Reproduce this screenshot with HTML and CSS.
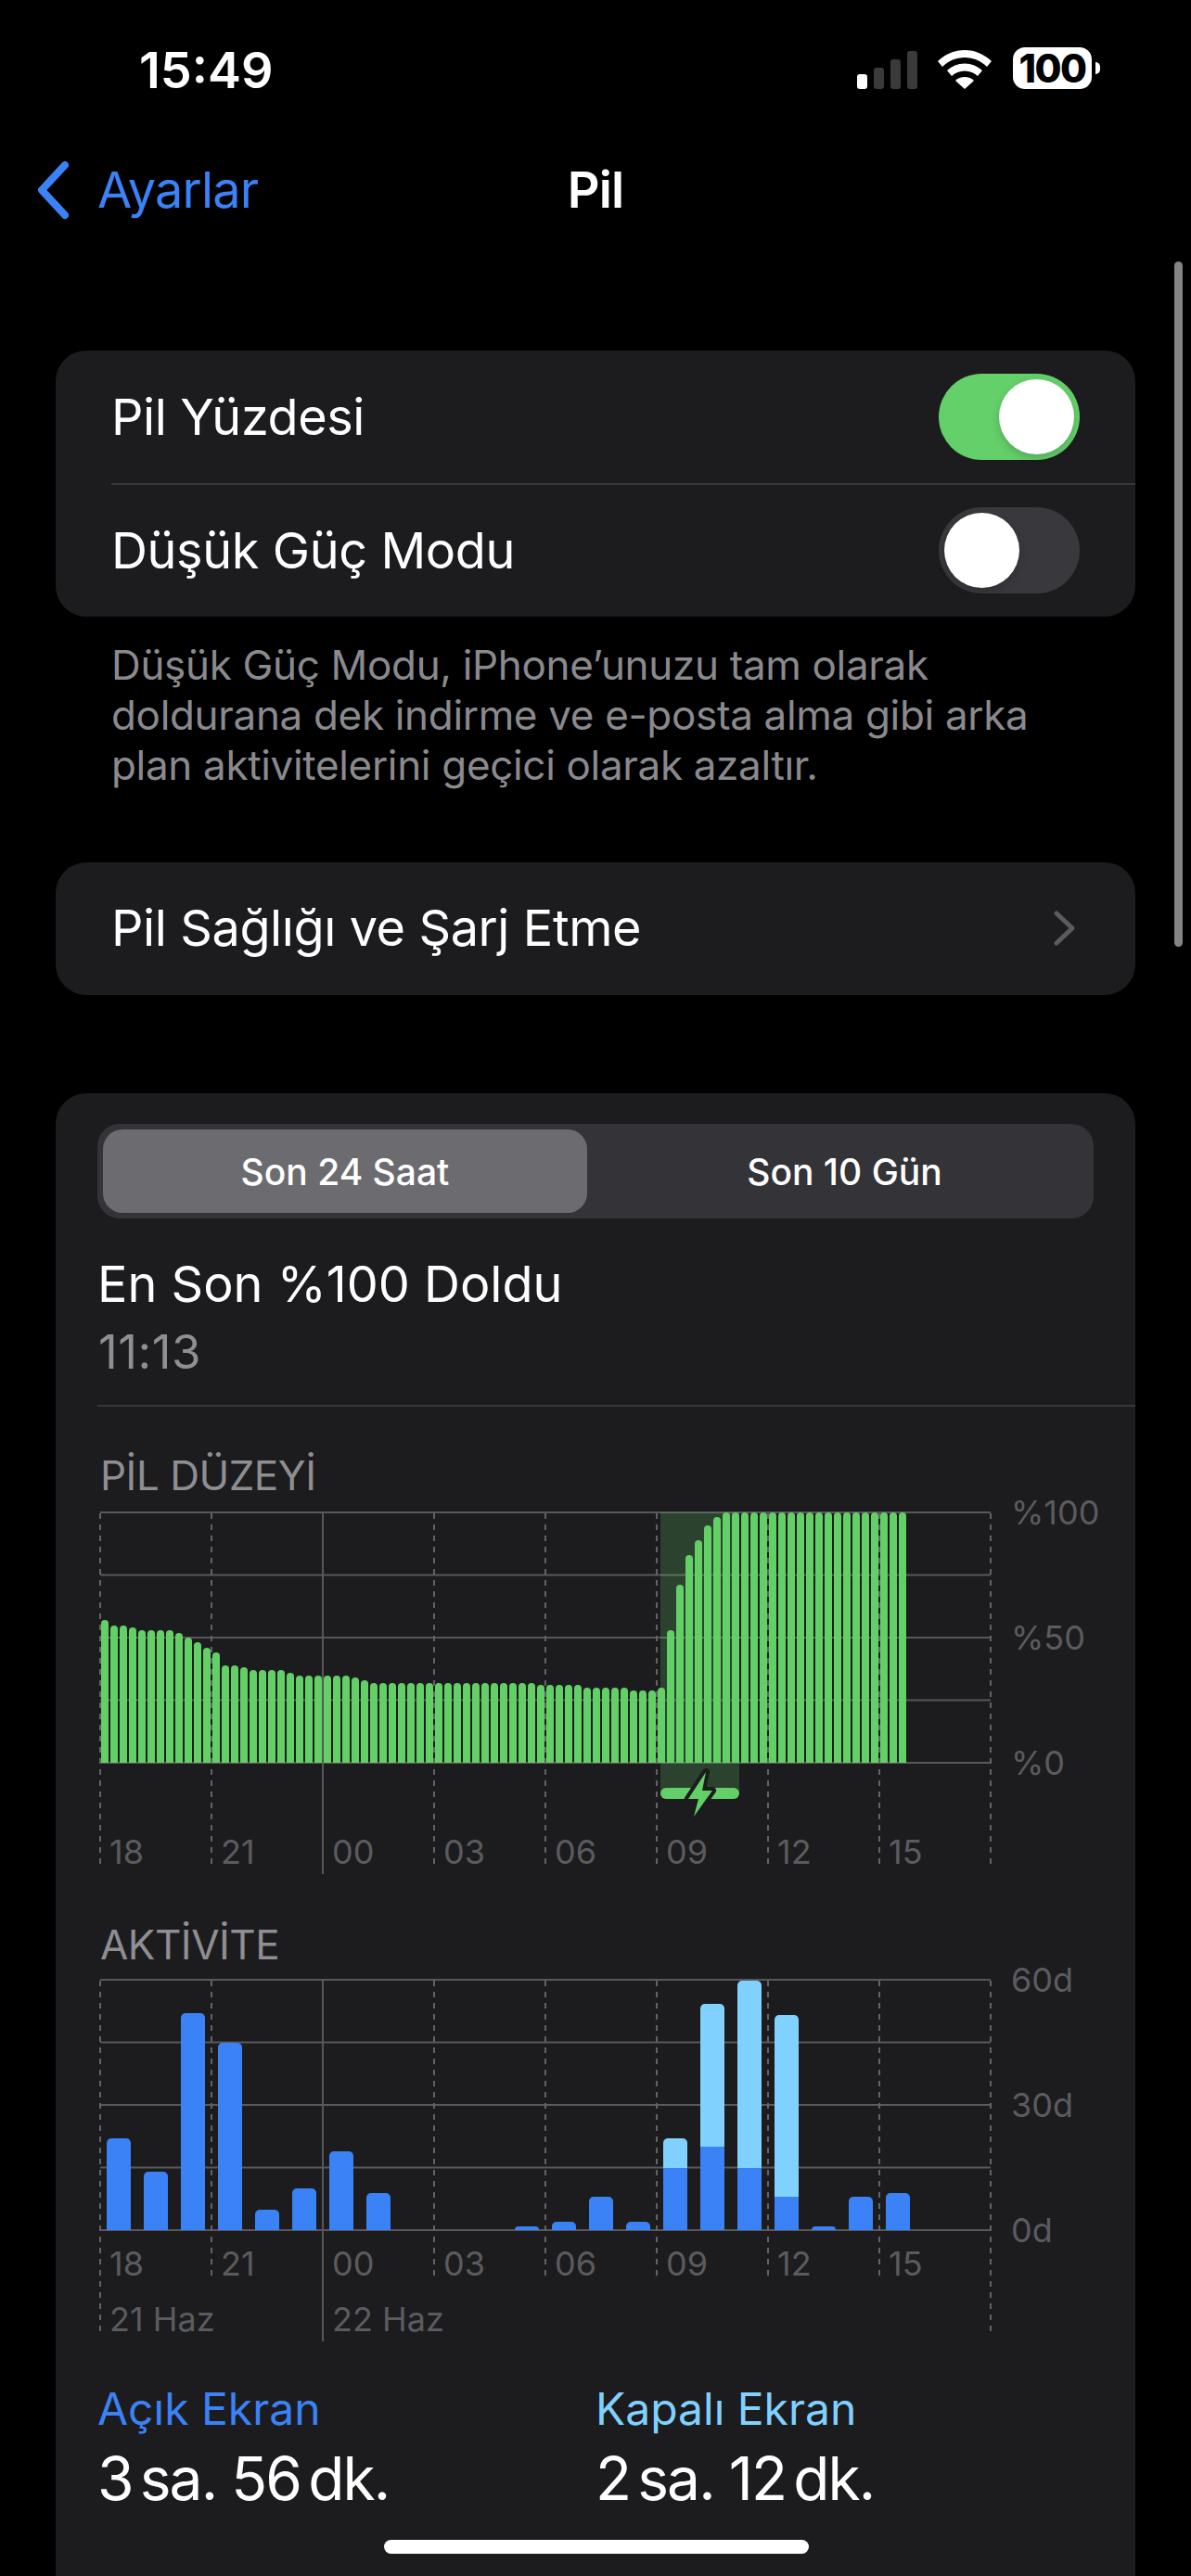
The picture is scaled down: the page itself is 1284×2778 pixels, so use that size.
FILE: index.html
```html
<!DOCTYPE html>
<html lang="tr">
<head>
<meta charset="utf-8">
<title>Pil</title>
<link rel="stylesheet" href="styles.css">
</head>
<body>
<div class="screen">
  <header class="status">
    <span class="clock">15:49</span>
    <div class="status-icons">
      <div class="signal"><i class="on s1"></i><i class="s2"></i><i class="s3"></i><i class="s4"></i></div>
      <svg class="wifi" viewBox="0 0 58 42"><path fill="#fff" d="M29 0C18 0 8 4.500 0 12l5 6C11.500 11.500 20 8 29 8s17.500 3.500 24 10l5-6C50 4.500 40 0 29 0z"/><path fill="#fff" d="M29 14.500c-7.500 0-14 3-19 7.500l5 6c3.500-3.300 8.500-5.500 14-5.500s10.500 2.200 14 5.500l5-6c-5-4.500-11.500-7.500-19-7.500z"/><path fill="#fff" d="M29 29c-4 0-7.500 1.500-10 4l10 9 10-9c-2.500-2.500-6-4-10-4z"/></svg>
      <div class="battery"><span class="battery-body">100</span><i class="battery-nub"></i></div>
    </div>
  </header>

  <nav class="nav">
    <a class="back">
      <svg class="back-icon" viewBox="0 0 36 64"><path d="M31 5 6 32l25 27" fill="none" stroke="#3b82f7" stroke-width="8" stroke-linecap="round" stroke-linejoin="round"/></svg>
      <span>Ayarlar</span>
    </a>
    <h1 class="nav-title">Pil</h1>
    <span></span>
  </nav>

  <main class="content">
    <section class="card rows">
      <div class="row">
        <span class="row-label">Pil Yüzdesi</span>
        <span class="toggle toggle-on"><i class="knob"></i></span>
      </div>
      <div class="row">
        <span class="row-label">Düşük Güç Modu</span>
        <span class="toggle"><i class="knob"></i></span>
      </div>
    </section>
    <p class="note">Düşük Güç Modu, iPhone’unuzu tam olarak<br>doldurana dek indirme ve e-posta alma gibi arka<br>plan aktivitelerini geçici olarak azaltır.</p>

    <section class="card single">
      <div class="row">
        <span class="row-label">Pil Sağlığı ve Şarj Etme</span>
        <svg class="chevron" viewBox="0 0 26 40"><path d="M4 4l17 16L4 36" fill="none" stroke="#5b5b5f" stroke-width="5" stroke-linecap="round" stroke-linejoin="round"/></svg>
      </div>
    </section>

    <section class="card usage">
      <div class="segmented">
        <span class="segment segment-active">Son 24 Saat</span>
        <span class="segment">Son 10 Gün</span>
      </div>
      <h2 class="full-title">En Son %100 Doldu</h2>
      <p class="full-time">11:13</p>
      <hr class="usage-rule">

      <div class="chart chart-level">
        <h3 class="chart-title">PİL DÜZEYİ</h3>
        <div class="plot">
          <svg class="grid grid-level" viewBox="0 0 962 392">
            <g class="hline">
              <line x1="1" y1="1" x2="961" y2="1"/><line x1="1" y1="68.500" x2="961" y2="68.500"/><line x1="1" y1="136" x2="961" y2="136"/><line x1="1" y1="203.500" x2="961" y2="203.500"/><line x1="1" y1="271" x2="961" y2="271"/>
            </g>
            <g class="vdash">
              <line x1="1" y1="2" x2="1" y2="386"/><line x1="121" y1="2" x2="121" y2="386"/><line x1="361" y1="2" x2="361" y2="386"/><line x1="481" y1="2" x2="481" y2="386"/><line x1="601" y1="2" x2="601" y2="386"/><line x1="721" y1="2" x2="721" y2="386"/><line x1="841" y1="2" x2="841" y2="386"/><line x1="961" y1="2" x2="961" y2="386"/>
            </g>
            <line class="vsolid" x1="241" y1="1" x2="241" y2="391"/>
          </svg>
          <div class="charging"></div>
          <div class="level-bars">
            <i style="height:57%"></i><i style="height:55%"></i><i style="height:55%"></i><i style="height:54%"></i><i style="height:53%"></i><i style="height:53%"></i><i style="height:53%"></i><i style="height:53%"></i><i style="height:52%"></i><i style="height:50%"></i><i style="height:48%"></i><i style="height:46%"></i><i style="height:44%"></i><i style="height:39%"></i><i style="height:39%"></i><i style="height:38%"></i><i style="height:37%"></i><i style="height:37%"></i><i style="height:37%"></i><i style="height:37%"></i><i style="height:36%"></i><i style="height:35%"></i><i style="height:35%"></i><i style="height:35%"></i><i style="height:35%"></i><i style="height:35%"></i><i style="height:35%"></i><i style="height:34%"></i><i style="height:33%"></i><i style="height:32%"></i><i style="height:32%"></i><i style="height:32%"></i><i style="height:32%"></i><i style="height:32%"></i><i style="height:32%"></i><i style="height:32%"></i><i style="height:32%"></i><i style="height:32%"></i><i style="height:32%"></i><i style="height:32%"></i><i style="height:32%"></i><i style="height:32%"></i><i style="height:32%"></i><i style="height:32%"></i><i style="height:32%"></i><i style="height:32%"></i><i style="height:32%"></i><i style="height:31%"></i><i style="height:31%"></i><i style="height:31%"></i><i style="height:31%"></i><i style="height:31%"></i><i style="height:30%"></i><i style="height:30%"></i><i style="height:30%"></i><i style="height:30%"></i><i style="height:30%"></i><i style="height:29%"></i><i style="height:29%"></i><i style="height:29%"></i><i style="height:30%"></i><i style="height:53%"></i><i style="height:71%"></i><i style="height:83%"></i><i style="height:89%"></i><i style="height:95%"></i><i style="height:98%"></i><i style="height:100%"></i><i style="height:100%"></i><i style="height:100%"></i><i style="height:100%"></i><i style="height:100%"></i><i style="height:100%"></i><i style="height:100%"></i><i style="height:100%"></i><i style="height:100%"></i><i style="height:100%"></i><i style="height:100%"></i><i style="height:100%"></i><i style="height:100%"></i><i style="height:100%"></i><i style="height:100%"></i><i style="height:100%"></i><i style="height:100%"></i><i style="height:100%"></i><i style="height:100%"></i><i style="height:100%"></i>
          </div>
          <div class="charge-pill"></div>
          <svg class="bolt" viewBox="0 0 48 58"><path d="M30 5 11 34h11l-5 19 20-28H26z" fill="#63cf67" stroke="#1c1c1e" stroke-width="8" stroke-linejoin="round" paint-order="stroke"/></svg>
          <div class="y-axis"><span>%100</span><span>%50</span><span>%0</span></div>
        </div>
        <div class="hours"><span>18</span><span>21</span><span>00</span><span>03</span><span>06</span><span>09</span><span>12</span><span>15</span></div>
      </div>

      <div class="chart chart-activity">
        <h3 class="chart-title">AKTİVİTE</h3>
        <div class="plot">
          <svg class="grid grid-activity" viewBox="0 0 962 392">
            <g class="hline">
              <line x1="1" y1="1" x2="961" y2="1"/><line x1="1" y1="68.500" x2="961" y2="68.500"/><line x1="1" y1="136" x2="961" y2="136"/><line x1="1" y1="203.500" x2="961" y2="203.500"/><line x1="1" y1="271" x2="961" y2="271"/>
            </g>
            <g class="vdash">
              <line x1="1" y1="2" x2="1" y2="384"/><line x1="121" y1="2" x2="121" y2="324"/><line x1="361" y1="2" x2="361" y2="324"/><line x1="481" y1="2" x2="481" y2="324"/><line x1="601" y1="2" x2="601" y2="324"/><line x1="721" y1="2" x2="721" y2="324"/><line x1="841" y1="2" x2="841" y2="324"/><line x1="961" y1="2" x2="961" y2="384"/>
            </g>
            <line class="vsolid" x1="241" y1="1" x2="241" y2="391"/>
          </svg>
          <div class="activity-bars">
            <i class="stack" style="height:99px"><b class="on-screen" style="height:99px"></b></i>
            <i class="stack" style="height:63px"><b class="on-screen" style="height:63px"></b></i>
            <i class="stack" style="height:234px"><b class="on-screen" style="height:234px"></b></i>
            <i class="stack" style="height:202px"><b class="on-screen" style="height:202px"></b></i>
            <i class="stack" style="height:22px"><b class="on-screen" style="height:22px"></b></i>
            <i class="stack" style="height:45px"><b class="on-screen" style="height:45px"></b></i>
            <i class="stack" style="height:85px"><b class="on-screen" style="height:85px"></b></i>
            <i class="stack" style="height:40px"><b class="on-screen" style="height:40px"></b></i>
            <i class="stack"></i>
            <i class="stack"></i>
            <i class="stack"></i>
            <i class="stack" style="height:4px"><b class="on-screen" style="height:4px"></b></i>
            <i class="stack" style="height:9px"><b class="on-screen" style="height:9px"></b></i>
            <i class="stack" style="height:36px"><b class="on-screen" style="height:36px"></b></i>
            <i class="stack" style="height:9px"><b class="on-screen" style="height:9px"></b></i>
            <i class="stack" style="height:99px"><b class="on-screen" style="height:67px"></b></i>
            <i class="stack" style="height:244px"><b class="on-screen" style="height:90px"></b></i>
            <i class="stack" style="height:269px"><b class="on-screen" style="height:67px"></b></i>
            <i class="stack" style="height:232px"><b class="on-screen" style="height:36px"></b></i>
            <i class="stack" style="height:4px"><b class="on-screen" style="height:4px"></b></i>
            <i class="stack" style="height:36px"><b class="on-screen" style="height:36px"></b></i>
            <i class="stack" style="height:40px"><b class="on-screen" style="height:40px"></b></i>
          </div>
          <div class="y-axis"><span>60d</span><span>30d</span><span>0d</span></div>
        </div>
        <div class="hours"><span>18</span><span>21</span><span>00</span><span>03</span><span>06</span><span>09</span><span>12</span><span>15</span></div>
        <div class="dates"><span>21 Haz</span><span>22 Haz</span></div>
      </div>

      <div class="totals">
        <div class="total">
          <div class="total-label total-on">Açık Ekran</div>
          <div class="total-value"><span>3 sa.</span> <span>56 dk.</span></div>
        </div>
        <div class="total">
          <div class="total-label total-off">Kapalı Ekran</div>
          <div class="total-value"><span>2 sa.</span> <span>12 dk.</span></div>
        </div>
      </div>
    </section>
  </main>

  <div class="scrollbar"></div>
  <div class="home-indicator"></div>
</div>
</body>
</html>
```
FILE: styles.css
```css
* { box-sizing: border-box; }
html, body { margin: 0; padding: 0; background: #000; }
body { font-family: Inter, "Noto Sans", "Liberation Sans", sans-serif; color: #fff; }
h1, h2, h3, p, hr { margin: 0; padding: 0; font: inherit; }
i, b { display: block; font-style: normal; }

.screen { position: relative; width: 1284px; height: 2778px; overflow: hidden; background: #000; }

/* status bar */
.status { display: flex; justify-content: space-between; height: 150px; padding: 48px 98px 0 150px; }
.clock { font-size: 54px; line-height: 56px; font-weight: 600; }
.status-icons { display: flex; align-items: flex-start; padding-top: 5px; }
.signal { display: flex; align-items: flex-end; gap: 7px; height: 41px; margin-top: 2px; }
.signal i { width: 11px; border-radius: 3px; background: #3a3a3a; }
.signal .on { background: #fff; }
.s1 { height: 16px; } .s2 { height: 23px; } .s3 { height: 32px; } .s4 { height: 41px; }
.wifi { width: 58px; height: 42px; margin: 1px 0 0 22px; }
.battery { display: flex; align-items: center; margin: -2px 0 0 23px; }
.battery-body { width: 85px; height: 45px; border-radius: 13px; background: #fff; color: #000; font-size: 42px; line-height: 45px; font-weight: 800; text-align: center; letter-spacing: -1.500px; }
.battery-nub { width: 5px; height: 13px; margin-left: 4px; background: #fff; border-radius: 0 6px 6px 0; }

/* nav */
.nav { display: grid; grid-template-columns: 1fr auto 1fr; align-items: center; height: 110px; padding: 0 39px; }
.back { display: flex; align-items: center; gap: 30px; color: #3b82f7; font-size: 54px; line-height: 64px; letter-spacing: -.8px; }
.back-icon { width: 36px; height: 64px; }
.nav-title { font-size: 54px; line-height: 64px; font-weight: 600; letter-spacing: -.8px; }

/* content */
.content { padding: 118px 60px 0; }
.card { background: #1c1c1e; border-radius: 33px; }
.row { display: flex; align-items: center; justify-content: space-between; height: 143.500px; padding: 0 60px; font-size: 54px; letter-spacing: -.4px; }
.rows .row + .row { position: relative; }
.rows .row + .row::before { content: ""; position: absolute; top: -1px; left: 60px; right: 0; height: 2px; background: #38383a; }
.toggle { display: flex; align-items: center; width: 152px; height: 93px; padding: 0 6px; border-radius: 47px; background: #39393d; }
.toggle-on { background: #64d06a; justify-content: flex-end; }
.knob { width: 81px; height: 81px; border-radius: 50%; background: #fff; box-shadow: 0 4px 10px rgba(0,0,0,.18); }
.note { padding: 25px 60px 0; height: 265px; font-size: 44px; line-height: 54px; color: #8a8a8e; letter-spacing: -.33px; }
.single .row { height: 143px; padding-right: 63px; padding-bottom: 2px; }
.chevron { width: 26px; height: 40px; }

.usage { margin-top: 106px; height: 1700px; padding: 33px 45px 0; overflow: hidden; }
.segmented { display: grid; grid-template-columns: 522px 1fr; column-gap: 9px; align-items: center; height: 102px; padding: 6px 0 6px 6px; border-radius: 24px; background: #333338; font-size: 39px; font-weight: 500; }
.segment { display: flex; align-items: center; justify-content: center; height: 90px; border-radius: 21px; }
.segment-active { background: #6c6c70; }
.full-title { margin: 39px 0 0 0; font-size: 54px; line-height: 64px; }
.full-time { margin: 9px 0 0 1px; font-size: 51px; line-height: 64px; color: #8e8e93; letter-spacing: .5px; }
.usage-rule { height: 2px; margin: 25px -45px 0 0; border: 0; background: #38383a; }

/* charts */
.chart { margin-left: 2px; }
.chart-title { font-size: 44px; line-height: 48px; color: #8e8e93; letter-spacing: -.5px; padding-left: 1px; }
.chart-level { padding-top: 50px; }
.chart-activity { margin-top: 54px; }
.plot { position: relative; display: grid; grid-template-columns: 961px auto; height: 272px; }
.chart-level .plot { margin-top: 15px; }
.chart-activity .plot { margin-top: 13px; }
.grid { position: absolute; top: 0; left: 0; width: 962px; height: 392px; }
.hline line { stroke: #58585a; stroke-width: 2; }
.vdash line { stroke: #636365; stroke-width: 2; stroke-dasharray: 6 6; }
.vsolid { stroke: #58585a; stroke-width: 2; }
.charging { position: absolute; top: 1px; left: 605px; width: 85px; height: 303px; background: rgba(99,207,103,.22); }
.level-bars { position: relative; display: flex; align-items: flex-end; gap: 2px; height: 270px; margin-top: 1px; padding-left: 2px; }
.level-bars i { width: 8px; flex: none; background: #63cf67; border-radius: 4px 4px 0 0; }
.charge-pill { position: absolute; top: 298px; left: 605px; width: 85px; height: 12px; border-radius: 6px; background: #63cf67; }
.bolt { position: absolute; top: 276px; left: 624px; width: 48px; height: 58px; }
.y-axis { position: relative; display: flex; flex-direction: column; justify-content: space-between; height: 270px; margin-top: 1px; padding-left: 22px; font-size: 36px; color: #5b5b5f; }
.y-axis span { display: flex; align-items: center; height: 0; }
.hours { position: relative; display: grid; grid-template-columns: repeat(8, 120px); margin-top: 73px; padding-left: 11px; font-size: 36px; line-height: 44px; color: #5b5b5f; }
.chart-activity .hours { margin-top: 13px; }
.activity-bars { position: relative; display: flex; align-items: flex-end; gap: 14px; height: 270px; margin-top: 1px; padding-left: 8px; }
.stack { display: flex; align-items: flex-end; width: 26px; background: #81d1ff; border-radius: 5px 5px 0 0; overflow: hidden; }
.on-screen { width: 100%; background: #3b82f7; }
.dates { position: relative; display: grid; grid-template-columns: 240px auto; margin-top: 16px; padding-left: 11px; font-size: 36px; line-height: 44px; color: #5b5b5f; }

/* totals */
.totals { display: grid; grid-template-columns: 537px auto; margin: 45px 0 0 0; }
.total-label { font-size: 48px; line-height: 60px; }
.total-on { color: #3b82f7; }
.total-off { color: #81d1ff; }
.total-value { margin-top: 9px; font-size: 64px; line-height: 72px; letter-spacing: -1.900px; }
.total-value span { word-spacing: -8px; }

/* overlays */
.scrollbar { position: absolute; top: 282px; right: 9px; width: 9px; height: 739px; border-radius: 5px; background: #848484; }
.home-indicator { position: absolute; left: 414px; top: 2739px; width: 458px; height: 15px; border-radius: 8px; background: #fff; }
```
